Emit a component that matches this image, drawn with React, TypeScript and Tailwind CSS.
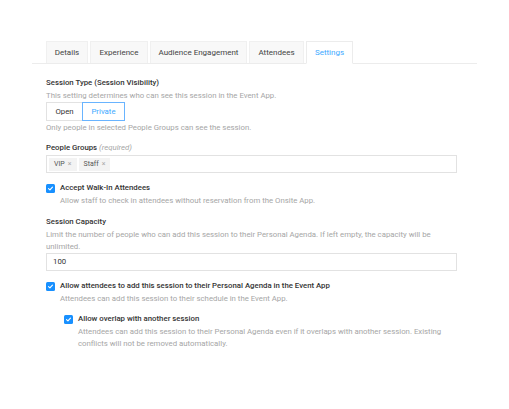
import React from "react";

function Check() {
  return (
    <span className="flex h-[9px] w-[9px] shrink-0 items-center justify-center rounded-[1.5px] bg-[#1890ff]">
      <svg width="7" height="7" viewBox="0 0 10 10" fill="none">
        <path d="M2.2 5.2 L4.2 7 L7.8 3" stroke="white" strokeWidth="1.6" strokeLinecap="round" strokeLinejoin="round" />
      </svg>
    </span>
  );
}

const tabs: { t: string; w: string }[] = [
  { t: "Details", w: "w-[42px]" },
  { t: "Experience", w: "w-[58px]" },
  { t: "Audience Engagement", w: "w-[97px]" },
  { t: "Attendees", w: "w-[55px]" },
  { t: "Settings", w: "w-[47px]" },
];

export default function App() {
  return (
    <div className="min-h-[409px] w-[509px] bg-white pt-[41px] pl-[32px] text-[8px] leading-[12px] text-[#333]" style={{ fontFamily: "Roboto, 'Liberation Sans', sans-serif" }}>
      <div className="flex w-[445px] gap-[2px] border-b border-[#ececec] pl-[14px]">
        {tabs.map(({ t, w }) => (
          <div
            key={t}
            className={
              t === "Settings"
                ? `mb-[-1px] flex h-[23px] ${w} items-center justify-center border border-b-white border-[#ececec] bg-white text-[#40a9ff]`
                : `flex h-[22px] ${w} items-center justify-center border border-b-0 border-[#f0f0f0] bg-[#f8f8f8] text-[#444]`
            }
          >
            {t}
          </div>
        ))}
      </div>

      <div className="w-[411px] pl-[14px] pt-[13px] box-content text-[7.8px]">
        <div className="font-medium text-[#333]">Session Type (Session Visibility)</div>
        <div className="mt-[1px] text-[#a6a6a6]">This setting determines who can see this session in the Event App.</div>
        <div className="flex h-[19px]">
          <div className="flex w-[36px] items-center justify-center border border-r-0 border-[#e2e2e2] text-[#333]">Open</div>
          <div className="flex w-[43px] items-center justify-center border border-[#69b4ff] text-[#40a9ff]">Private</div>
        </div>
        <div className="mt-[1px] text-[#a6a6a6]">Only people in selected People Groups can see the session.</div>

        <div className="mt-[8px] font-medium">
          People Groups <span className="font-normal italic text-[#a6a6a6]">(required)</span>
        </div>
        <div className="mt-[1px] flex h-[18px] items-center gap-[2px] border border-[#e2e2e2] px-[2px]">
          <span className="flex h-[13px] items-center gap-[3px] bg-[#f3f3f3] px-[5px] text-[7px] text-[#555]">
            VIP <span className="text-[#aaa]">×</span>
          </span>
          <span className="flex h-[13px] items-center gap-[3px] bg-[#f3f3f3] px-[5px] text-[7px] text-[#555]">
            Staff <span className="text-[#aaa]">×</span>
          </span>
        </div>

        <div className="mt-[9px] flex items-center gap-[5px]">
          <Check />
          <span className="font-medium">Accept Walk-In Attendees</span>
        </div>
        <div className="mt-[1px] pl-[14px] text-[#a6a6a6]">Allow staff to check in attendees without reservation from the Onsite App.</div>

        <div className="mt-[9px] font-medium">Session Capacity</div>
        <div className="mt-[1px] text-[#a6a6a6]">
          Limit the number of people who can add this session to their Personal Agenda. If left empty, the capacity will be unlimited.
        </div>
        <div className="flex h-[18px] items-center border border-[#e2e2e2] px-[6px] text-[#333]">100</div>

        <div className="mt-[9px] flex items-center gap-[5px]">
          <Check />
          <span className="font-medium">Allow attendees to add this session to their Personal Agenda in the Event App</span>
        </div>
        <div className="mt-[1px] pl-[14px] text-[#a6a6a6]">Attendees can add this session to their schedule in the Event App.</div>

        <div className="pl-[18px]">
          <div className="mt-[8px] flex items-center gap-[5px]">
            <Check />
            <span className="font-medium">Allow overlap with another session</span>
          </div>
          <div className="mt-[1px] pl-[14px] text-[#a6a6a6]">
            Attendees can add this session to their Personal Agenda even if it overlaps with another session. Existing conflicts will not be removed automatically.
          </div>
        </div>
      </div>
    </div>
  );
}
